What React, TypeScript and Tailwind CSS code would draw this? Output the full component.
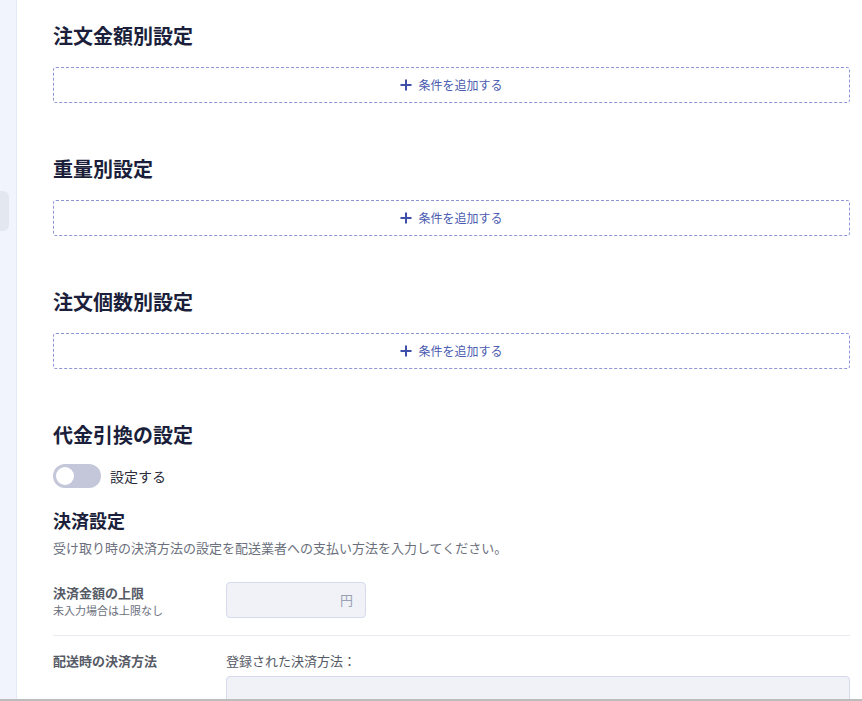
const font = { fontFamily: '"Noto Sans CJK JP", "Noto Sans", sans-serif' }

const AddBox = () => (
	<div className="mt-[17px] flex h-9 items-center justify-center rounded-[3px] border border-dashed border-[#8c95d6] text-[12px] text-[#3d4fa8]">
		<svg width="12" height="12" viewBox="0 0 12 12" className="mr-1.5">
			<path d="M6 0.5v11M0.5 6h11" stroke="#3d4fa8" strokeWidth="2" />
		</svg>
		<span className="text-[#4a5bb0]">条件を追加する</span>
	</div>
)

const Section = ({ title }: { title: string }) => (
	<div className="h-[133px]">
		<h2 className="pt-[22px] text-[20px] font-bold leading-[28px] text-[#1b1f3b]">{title}</h2>
		<AddBox />
	</div>
)

export default function App() {
	return (
		<div style={font} className="flex h-[701px] w-[862px] overflow-hidden border-b-2 border-[#bcbcbc] bg-white">
			<div className="relative w-[17px] shrink-0 border-r border-[#e3e8f5] bg-[#f1f4fc]">
				<div className="absolute left-0 top-[191px] h-10 w-[9px] rounded-r-md bg-[#e3e7f0]" />
			</div>
			<div className="flex-1 pl-9 pr-3">
				<Section title="注文金額別設定" />
				<Section title="重量別設定" />
				<Section title="注文個数別設定" />
				<h2 className="pt-[22px] text-[20px] font-bold leading-[28px] text-[#1b1f3b]">代金引換の設定</h2>
				<div className="mt-[15px] flex items-center gap-[9px]">
					<div className="flex h-6 w-12 items-center rounded-full bg-[#c3c7d9] px-[3px]">
						<div className="h-[18px] w-[18px] rounded-full bg-white" />
					</div>
					<span className="text-[14px] text-[#2a2d3a]">設定する</span>
				</div>
				<h3 className="mt-[19px] text-[18px] font-bold leading-[26px] text-[#1b1f3b]">決済設定</h3>
				<p className="mt-[5px] text-[13px] text-[#6b6f7c]">受け取り時の決済方法の設定を配送業者への支払い方法を入力してください。</p>
				<div className="mt-[24px] flex border-b border-[#e8eaf0] pb-4">
					<div className="w-[173px]">
						<div className="mt-[1px] text-[13px] font-bold text-[#555a66]">決済金額の上限</div>
						<div className="text-[11px] text-[#6b6f7c]">未入力場合は上限なし</div>
					</div>
					<div className="flex h-9 w-[140px] items-center justify-end rounded border border-[#d5daeb] bg-[#f0f2f8] pr-3 text-[13px] text-[#9aa0b3]">円</div>
				</div>
				<div className="mt-[15px] flex">
					<div className="w-[173px] text-[13px] font-bold text-[#555a66]">配送時の決済方法</div>
					<div className="flex-1">
						<div className="text-[13px] text-[#555a66]">登録された決済方法：</div>
						<div className="mt-[6px] h-9 rounded border border-[#d5daeb] bg-[#f0f2f8]" />
					</div>
				</div>
			</div>
		</div>
	)
}
